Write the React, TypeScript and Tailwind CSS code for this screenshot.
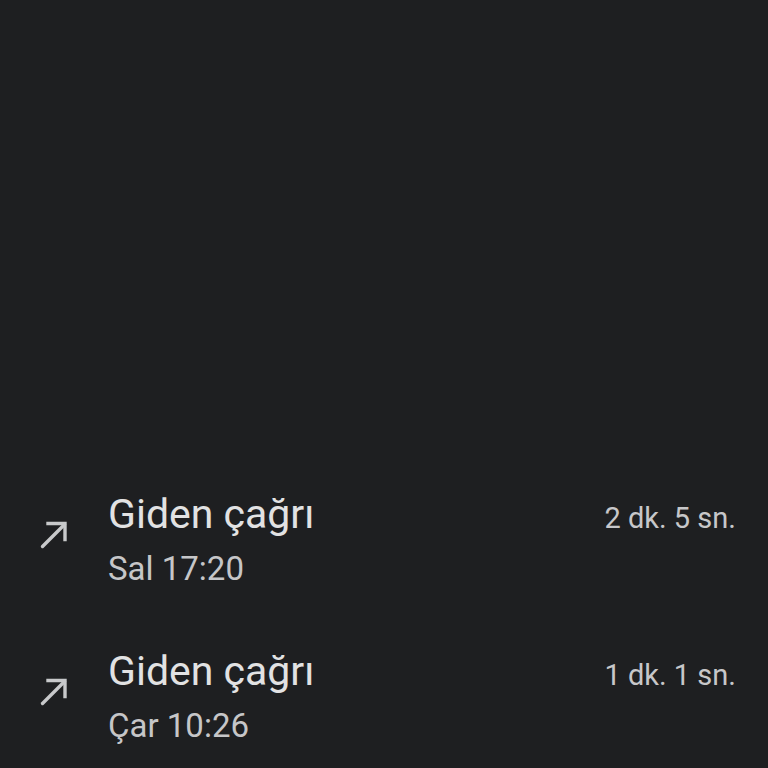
import React from "react";

type Call = { label: string; time: string; duration: string };

const calls: Call[] = [
  { label: "Giden çağrı", time: "Sal 17:20", duration: "2 dk. 5 sn." },
  { label: "Giden çağrı", time: "Çar 10:26", duration: "1 dk. 1 sn." },
];

// outgoing call arrow
const OutgoingIcon = () => (
  <svg viewBox="0 0 40 40" className="w-10 h-10 shrink-0" fill="none" stroke="#c8c9cb" strokeWidth={3.4}>
    <path d="M7.5 32.5 29.5 10.5" strokeLinecap="round" />
    <path d="M13 9.5h17v16" strokeLinecap="square" />
  </svg>
);

const CallRow = ({ call }: { call: Call }) => (
  <div className="flex items-start">
    <div className="pt-[24px] pl-[35px] w-[108px]">
      <OutgoingIcon />
    </div>
    <div className="flex-1 flex flex-col">
      <div className="flex items-baseline justify-between">
        <span className="text-[41px] leading-[48px] text-[#e2e2e3]">{call.label}</span>
        <span className="text-[29px] leading-[48px] text-[#c7c7c9]">{call.duration}</span>
      </div>
      <span className="mt-[5px] text-[33px] leading-[44px] text-[#c6c6c8]">{call.time}</span>
    </div>
  </div>
);

export default function App() {
  return (
    <div
      className="h-[768px] w-full bg-[#1e1f21] flex flex-col justify-end gap-[56px] pb-[20px] pr-[32px]"
      style={{ fontFamily: "Roboto, 'Noto Sans', sans-serif" }}
    >
      {calls.map((c, i) => (
        <CallRow key={i} call={c} />
      ))}
    </div>
  );
}
